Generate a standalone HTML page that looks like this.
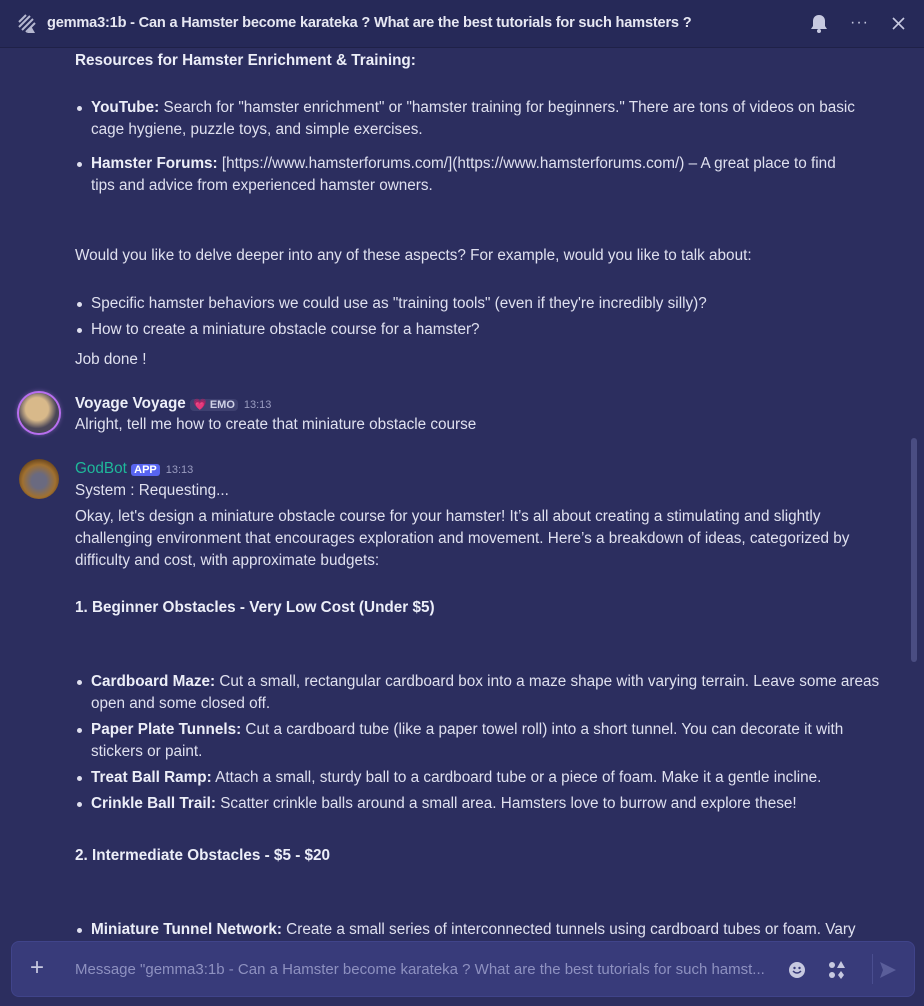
<!DOCTYPE html>
<html><head><meta charset="utf-8"><style>
*{margin:0;padding:0;box-sizing:border-box}
body{width:924px;height:1006px;background:#2c2e5f;font-family:"Liberation Sans",sans-serif;color:#dfe0ef;overflow:hidden;position:relative}
.hd{position:absolute;left:0;top:0;width:924px;height:48px;background:#262958;border-bottom:1px solid #1f2148}
.hd .t{position:absolute;left:47px;top:15px;font-size:14.6px;font-weight:bold;color:#e6e7f2;white-space:nowrap;letter-spacing:-0.2px}
.l{position:absolute;left:75px;font-size:15.3px;white-space:nowrap;line-height:20px;letter-spacing:0}
.b{left:91px}
.b::before{content:"";position:absolute;left:-14px;top:8px;width:5px;height:5px;border-radius:50%;background:#dfe0ef}
.nb::before{display:none}
b{color:#eceef8}
.av{position:absolute;left:19px;width:40px;height:40px;border-radius:50%}
.ts{font-size:11px;color:#9a9cc0;margin-left:6px;font-weight:normal}
.inp{position:absolute;left:11px;top:941px;width:904px;height:56px;background:#383b7a;border-radius:8px;border:1px solid #40448a}
.sb{position:absolute;left:911px;top:438px;width:6px;height:224px;border-radius:3px;background:#4a4d82}
</style></head><body>
<div class="hd">
<svg style="position:absolute;left:17px;top:14px" width="22" height="20" viewBox="0 0 22 20"><g stroke="#b5b7d0" stroke-width="2"><path d="M2 8 L9 1 M2 13 L13 2 M5 16 L16 5 M9 18 L18 9"/></g><path d="M14 12 L18 19 L10 19 Z" fill="#b5b7d0"/></svg>
<div class="t">gemma3:1b - Can a Hamster become karateka ? What are the best tutorials for such hamsters ?</div>
<svg style="position:absolute;left:810px;top:14px" width="18" height="19" viewBox="0 0 18 19"><path d="M9 1 C5 1 3 4 3 7 L3 12 L1 15 L17 15 L15 12 L15 7 C15 4 13 1 9 1Z" fill="#c7c9e0"/><circle cx="9" cy="17" r="2" fill="#c7c9e0"/></svg>
<div style="position:absolute;left:850px;top:14px;font-size:16px;color:#c7c9e0;letter-spacing:1px">···</div>
<svg style="position:absolute;left:892px;top:17px" width="13" height="13" viewBox="0 0 13 13"><path d="M1 1L12 12M12 1L1 12" stroke="#c7c9e0" stroke-width="1.6"/></svg>
</div>

<div class="l" style="top:51px"><b>Resources for Hamster Enrichment &amp; Training:</b></div>
<div class="l b" style="top:98px"><b>YouTube:</b> Search for "hamster enrichment" or "hamster training for beginners." There are tons of videos on basic</div>
<div class="l b nb" style="top:120px">cage hygiene, puzzle toys, and simple exercises.</div>
<div class="l b" style="top:154px"><b>Hamster Forums:</b> [https://www.hamsterforums.com/](https://www.hamsterforums.com/) –  A great place to find</div>
<div class="l b nb" style="top:176px">tips and advice from experienced hamster owners.</div>
<div class="l" style="top:246px">Would you like to delve deeper into any of these aspects?  For example, would you like to talk about:</div>
<div class="l b" style="top:294px">Specific hamster behaviors we could use as "training tools" (even if they're incredibly silly)?</div>
<div class="l b" style="top:320px">How to create a miniature obstacle course for a hamster?</div>
<div class="l" style="top:350px">Job done !</div>

<div class="av" style="top:393px;background:radial-gradient(circle at 45% 40%,#d8b98a 0 35%,#4a4658 60%);box-shadow:0 0 0 2px #b86ff0,0 0 6px #c58cf5"></div>
<div class="l" style="top:394px"><b>Voyage Voyage</b> <span style="background:#3e4070;border-radius:4px;padding:0 3px;font-size:11px;font-weight:bold;color:#d0d2e6">💗 EMO</span><span class="ts">13:13</span></div>
<div class="l" style="top:415px">Alright, tell me how to create that miniature obstacle course</div>

<div class="av" style="top:459px;background:radial-gradient(circle at 50% 55%,#6a6a80 0 25%,#a07030 55%,#5a3a18 80%)"></div>
<div class="l" style="top:459px"><span style="color:#1fb89a">GodBot</span> <span style="background:#5865f2;color:#fff;border-radius:3px;padding:0 3px;font-size:11px;font-weight:bold">APP</span><span class="ts">13:13</span></div>
<div class="l" style="top:481px">System : Requesting...</div>
<div class="l" style="top:507px">Okay, let's design a miniature obstacle course for your hamster! It’s all about creating a stimulating and slightly</div>
<div class="l" style="top:529px">challenging environment that encourages exploration and movement. Here’s a breakdown of ideas, categorized by</div>
<div class="l" style="top:551px">difficulty and cost, with approximate budgets:</div>
<div class="l" style="top:598px"><b>1. Beginner Obstacles - Very Low Cost (Under $5)</b></div>
<div class="l b" style="top:672px"><b>Cardboard Maze:</b> Cut a small, rectangular cardboard box into a maze shape with varying terrain.  Leave some areas</div>
<div class="l b nb" style="top:694px">open and some closed off.</div>
<div class="l b" style="top:720px"><b>Paper Plate Tunnels:</b> Cut a cardboard tube (like a paper towel roll) into a short tunnel.  You can decorate it with</div>
<div class="l b nb" style="top:742px">stickers or paint.</div>
<div class="l b" style="top:768px"><b>Treat Ball Ramp:</b>  Attach a small, sturdy ball to a cardboard tube or a piece of foam.  Make it a gentle incline.</div>
<div class="l b" style="top:794px"><b>Crinkle Ball Trail:</b> Scatter crinkle balls around a small area.  Hamsters love to burrow and explore these!</div>
<div class="l" style="top:846px"><b>2. Intermediate Obstacles - $5 - $20</b></div>
<div class="l b" style="top:920px"><b>Miniature Tunnel Network:</b> Create a small series of interconnected tunnels using cardboard tubes or foam. Vary</div>

<div class="sb"></div>
<div class="inp">
<div style="position:absolute;left:18px;top:12px;font-size:24px;color:#c7c9e0;font-weight:300">+</div>
<div style="position:absolute;left:63px;top:19px;font-size:15px;color:#8e91c0;white-space:nowrap">Message "gemma3:1b - Can a Hamster become karateka ? What are the best tutorials for such hamst...</div>
<svg style="position:absolute;left:776px;top:19px" width="18" height="18"><circle cx="9" cy="9" r="8" fill="#c7c9e0"/><path d="M5 10 Q9 14 13 10" stroke="#383b7a" stroke-width="1.5" fill="none"/><circle cx="6.5" cy="7" r="1.2" fill="#383b7a"/><circle cx="11.5" cy="7" r="1.2" fill="#383b7a"/></svg>
<svg style="position:absolute;left:816px;top:19px" width="18" height="18" fill="#c7c9e0"><circle cx="4" cy="4" r="3"/><path d="M13 0 L17 7 L9 7Z"/><circle cx="4" cy="14" r="3"/><path d="M13 10 L16 14 L13 18 L10 14Z"/></svg>
<div style="position:absolute;left:860px;top:12px;width:1px;height:30px;background:#4a4e90"></div>
<svg style="position:absolute;left:866px;top:18px" width="20" height="20"><path d="M2 2 L18 10 L2 18 L5 10Z" fill="#5a5e9a"/></svg>
</div>
</body></html>
